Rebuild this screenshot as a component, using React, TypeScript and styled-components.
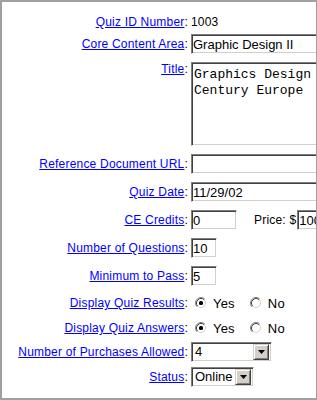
import React from "react";
import styled, { createGlobalStyle } from "styled-components";

const GlobalStyle = createGlobalStyle`
  html, body {
    margin: 0;
    padding: 0;
    background: #ffffff;
  }
  body {
    font-family: "Liberation Sans", Arial, sans-serif;
  }
`;

const Frame = styled.div`
  width: 317px;
  height: 400px;
  box-sizing: border-box;
  border-style: solid;
  border-color: #a0a0a0;
  border-width: 2px 1px 2px 2px;
  overflow: hidden;
  background: #ffffff;
  padding-top: 12px;
`;

const Form = styled.div`
  display: flex;
  flex-direction: column;
`;

const Row = styled.div<{ $h: number; $top?: boolean }>`
  display: grid;
  grid-template-columns: 186px auto;
  column-gap: 3px;
  height: ${(p) => p.$h}px;
  align-items: ${(p) => (p.$top ? "start" : "center")};
`;

const Label = styled.div<{ $top?: boolean }>`
  text-align: right;
  white-space: nowrap;
  font-size: 12px;
  letter-spacing: 0.2px;
  color: #000000;
  padding-top: ${(p) => (p.$top ? "4px" : "0")};
`;

const LabelLink = styled.a`
  color: #0000ff;
  text-decoration: underline;
  cursor: pointer;
`;

const Value = styled.div<{ $top?: boolean }>`
  display: flex;
  align-items: center;
  white-space: nowrap;
  font-size: 12px;
  letter-spacing: 0.2px;
  color: #000000;
  min-width: 0;
  padding-top: ${(p) => (p.$top ? "4px" : "0")};
`;

const TextInput = styled.input<{ $w: number }>`
  width: ${(p) => p.$w}px;
  height: 20px;
  box-sizing: border-box;
  margin: 0;
  padding: 0 1px;
  border: 1px solid;
  border-color: #808080 #ffffff #ffffff #808080;
  box-shadow: inset 1px 1px 0 #404040, inset -1px -1px 0 #d4d0c8;
  font-family: "Liberation Sans", Arial, sans-serif;
  font-size: 13px;
  color: #000000;
  background: #ffffff;
  outline: none;
  flex-shrink: 0;
`;

const TextArea = styled.textarea`
  width: 300px;
  height: 84px;
  box-sizing: border-box;
  margin: 0;
  padding: 4px 2px 1px;
  border: 1px solid;
  border-color: #808080 #ffffff #ffffff #808080;
  box-shadow: inset 1px 1px 0 #404040, inset -1px -1px 0 #d4d0c8;
  font-family: "Liberation Mono", "Courier New", monospace;
  font-size: 13px;
  line-height: 16px;
  color: #000000;
  resize: none;
  overflow: hidden;
  white-space: pre;
  outline: none;
  flex-shrink: 0;
`;

const PriceText = styled.span`
  margin-left: 17px;
  margin-right: 1px;
`;

const RadioGroup = styled.label<{ $gap: number }>`
  display: flex;
  align-items: center;
  margin-left: 4px;
  margin-right: ${(p) => p.$gap}px;
  font-size: 13px;
  gap: 6px;
`;

const SelectBox = styled.div<{ $w: number }>`
  width: ${(p) => p.$w}px;
  height: 20px;
  box-sizing: border-box;
  display: flex;
  align-items: center;
  border: 1px solid;
  border-color: #808080 #ffffff #ffffff #808080;
  box-shadow: inset 1px 1px 0 #404040, inset -1px -1px 0 #d4d0c8;
  padding: 1px 2px 1px 1px;
  background: #ffffff;
  flex-shrink: 0;
`;

const SelectText = styled.span`
  flex: 1;
  padding-left: 2px;
  font-size: 13px;
  letter-spacing: 0;
  line-height: 16px;
`;

const DropButton = styled.div`
  width: 16px;
  height: 16px;
  box-sizing: border-box;
  display: flex;
  align-items: center;
  justify-content: center;
  background: #d4d0c8;
  border: 1px solid;
  border-color: #d4d0c8 #404040 #404040 #d4d0c8;
  box-shadow: inset 1px 1px 0 #ffffff, inset -1px -1px 0 #808080;
`;

const Radio = ({ checked }: { checked?: boolean }) => (
  <svg width="12" height="12" viewBox="0 0 12 12">
    <circle cx="6" cy="6" r="4.5" fill="#ffffff" />
    <path d="M2.11 9.89 A5.5 5.5 0 0 1 9.89 2.11" stroke="#808080" fill="none" />
    <path d="M9.89 2.11 A5.5 5.5 0 0 1 2.11 9.89" stroke="#ffffff" fill="none" />
    <path d="M2.82 9.18 A4.5 4.5 0 0 1 9.18 2.82" stroke="#404040" fill="none" />
    <path d="M9.18 2.82 A4.5 4.5 0 0 1 2.82 9.18" stroke="#d4d0c8" fill="none" />
    {checked && <rect x="4" y="4" width="4" height="4" rx="1.5" fill="#000000" />}
  </svg>
);

const Arrow = () => (
  <svg width="7" height="4" viewBox="0 0 7 4">
    <path d="M0 0 H7 L3.5 4 Z" fill="#000000" />
  </svg>
);

const Select = ({ value, width }: { value: string; width: number }) => (
  <SelectBox $w={width}>
    <SelectText>{value}</SelectText>
    <DropButton>
      <Arrow />
    </DropButton>
  </SelectBox>
);

const Field = ({ label, children, h, top }: { label: string; children: React.ReactNode; h: number; top?: boolean }) => (
  <Row $h={h} $top={top}>
    <Label $top={top}>
      <LabelLink>{label}</LabelLink>:
    </Label>
    <Value $top={top}>{children}</Value>
  </Row>
);

const App = () => {
  return (
    <>
      <GlobalStyle />
      <Frame>
        <Form>
          <Field label="Quiz ID Number" h={16}>
            1003
          </Field>
          <Field label="Core Content Area" h={28}>
            <TextInput $w={300} defaultValue="Graphic Design II" readOnly />
          </Field>
          <Field label="Title" h={92} top>
            <TextArea defaultValue={"Graphics Design in 19th\nCentury Europe"} readOnly />
          </Field>
          <Field label="Reference Document URL" h={28}>
            <TextInput $w={300} defaultValue="" readOnly />
          </Field>
          <Field label="Quiz Date" h={28}>
            <TextInput $w={300} defaultValue="11/29/02" readOnly />
          </Field>
          <Field label="CE Credits" h={28}>
            <TextInput $w={46} defaultValue="0" readOnly />
            <PriceText>Price: $</PriceText>
            <TextInput $w={60} defaultValue="100.00" readOnly />
          </Field>
          <Field label="Number of Questions" h={28}>
            <TextInput $w={26} defaultValue="10" readOnly />
          </Field>
          <Field label="Minimum to Pass" h={28}>
            <TextInput $w={26} defaultValue="5" readOnly />
          </Field>
          <Field label="Display Quiz Results" h={26}>
            <RadioGroup $gap={11}>
              <Radio checked />
              Yes
            </RadioGroup>
            <RadioGroup $gap={0}>
              <Radio />
              No
            </RadioGroup>
          </Field>
          <Field label="Display Quiz Answers" h={24}>
            <RadioGroup $gap={11}>
              <Radio checked />
              Yes
            </RadioGroup>
            <RadioGroup $gap={0}>
              <Radio />
              No
            </RadioGroup>
          </Field>
          <Field label="Number of Purchases Allowed" h={24}>
            <Select value="4" width={81} />
          </Field>
          <Field label="Status" h={26}>
            <Select value="Online" width={63} />
          </Field>
        </Form>
      </Frame>
    </>
  );
};

export default App;
